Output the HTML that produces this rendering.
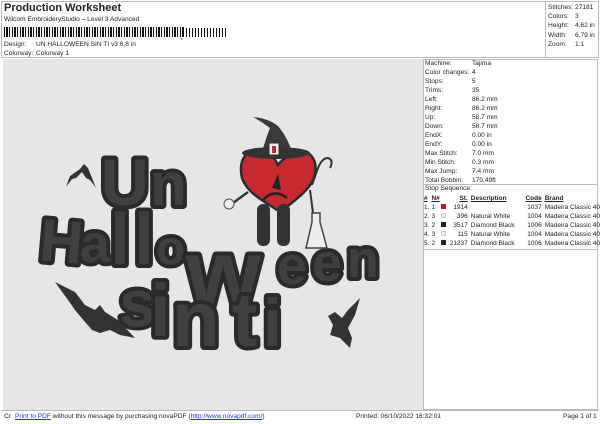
<!DOCTYPE html>
<html><head><style>
*{margin:0;padding:0;box-sizing:border-box}
body{width:600px;height:424px;background:#fff;position:relative;font-family:"Liberation Sans",sans-serif;overflow:hidden;color:#222}
.a{position:absolute;white-space:nowrap}
.s{font-size:6.6px}
.bar{position:absolute;left:4px;top:27px;width:180px;height:10px;background:repeating-linear-gradient(90deg,#111 0 1px,#fff 1px 2px,#111 2px 4px,#fff 4px 5px,#111 5px 6px,#fff 6px 8px)}
td{font-size:6.5px;padding:0;line-height:9px;white-space:nowrap}
svg text{font-family:"Liberation Sans",sans-serif;font-weight:bold;fill:#404040;stroke:#2a2a2a;stroke-width:8;paint-order:stroke;stroke-linejoin:round}
</style></head><body>
<div style="position:absolute;left:1px;top:1px;width:598px;height:57px;border:1px solid #bbb"></div>
<div class="a" style="left:4px;top:2px;font-size:11px;font-weight:bold">Production Worksheet</div>
<div class="a s" style="left:4px;top:16px">Wilcom EmbroideryStudio – Level 3 Advanced</div>
<div class="bar"></div>
<div class="a" style="left:186px;top:28px;width:40px;height:9px;background:repeating-linear-gradient(90deg,#111 0 1px,#fff 1px 3px)"></div>
<div class="a s" style="left:181px;top:34px;font-weight:bold">,</div>
<div class="a s" style="left:4px;top:41px">Design:</div>
<div class="a s" style="left:36px;top:41px">UN HALLOWEEN SIN TI v3 6,8 in</div>
<div class="a s" style="left:4px;top:50px">Colorway:</div>
<div class="a s" style="left:36px;top:50px">Colorway 1</div>
<div style="position:absolute;left:545px;top:1px;width:54px;height:57px;border-left:1px solid #bbb"></div>
<div class="a s" style="left:548px;top:3px;line-height:9.2px">Stitches:<br>Colors:<br>Height:<br>Width:<br>Zoom:</div>
<div class="a s" style="left:575px;top:3px;line-height:9.2px">27181<br>3<br>4.62 in<br>6.79 in<br>1:1</div>

<div style="position:absolute;left:3px;top:59px;width:420px;height:351px;background:#e6e6e6"></div>
<div style="position:absolute;left:423px;top:59px;width:175px;height:351px;border:1px solid #bbb"></div>
<div class="a s" style="left:425px;top:59px;line-height:9px">Machine:<br>Color changes:<br>Stops:<br>Trims:<br>Left:<br>Right:<br>Up:<br>Down:<br>EndX:<br>EndY:<br>Max Stitch:<br>Min Stitch:<br>Max Jump:<br>Total Bobbin:</div>
<div class="a s" style="left:472px;top:59px;line-height:9px">Tajima<br>4<br>5<br>35<br>86.2 mm<br>86.2 mm<br>58.7 mm<br>58.7 mm<br>0.00 in<br>0.00 in<br>7.0 mm<br>0.3 mm<br>7.4 mm<br>170.49ft</div>
<div style="position:absolute;left:423px;top:184px;width:175px;border-top:1px solid #bbb"></div>
<div style="position:absolute;left:423px;top:249px;width:175px;border-top:1px solid #bbb"></div>
<div class="a s" style="left:425px;top:185px">Stop Sequence:</div>
<table class="a" style="left:424px;top:194px;border-collapse:collapse">
<tr style="font-weight:bold;text-decoration:underline"><td style="width:9px">#</td><td style="width:10px">N#</td><td style="width:10px"></td><td style="width:20px;text-align:right">St.</td><td style="width:62px;padding-left:3px">Description</td><td style="width:20px;text-align:right">Code</td><td style="padding-left:3px">Brand</td></tr>
<tr><td>1.</td><td>1</td><td><span style="display:inline-block;width:5px;height:5px;background:#c8102e"></span></td><td style="text-align:right">1914</td><td></td><td style="text-align:right">1037</td><td style="padding-left:3px">Madeira Classic 40</td></tr>
<tr><td>2.</td><td>3</td><td><span style="display:inline-block;width:5px;height:5px;background:#eee;border:1px solid #ccc"></span></td><td style="text-align:right">396</td><td style="padding-left:3px">Natural White</td><td style="text-align:right">1004</td><td style="padding-left:3px">Madeira Classic 40</td></tr>
<tr><td>3.</td><td>2</td><td><span style="display:inline-block;width:5px;height:5px;background:#222"></span></td><td style="text-align:right">3517</td><td style="padding-left:3px">Diamond Black</td><td style="text-align:right">1006</td><td style="padding-left:3px">Madeira Classic 40</td></tr>
<tr><td>4.</td><td>3</td><td><span style="display:inline-block;width:5px;height:5px;background:#eee;border:1px solid #ccc"></span></td><td style="text-align:right">115</td><td style="padding-left:3px">Natural White</td><td style="text-align:right">1004</td><td style="padding-left:3px">Madeira Classic 40</td></tr>
<tr><td>5.</td><td>2</td><td><span style="display:inline-block;width:5px;height:5px;background:#222"></span></td><td style="text-align:right">21237</td><td style="padding-left:3px">Diamond Black</td><td style="text-align:right">1006</td><td style="padding-left:3px">Madeira Classic 40</td></tr>
</table>

<svg class="a" style="left:0;top:0" width="423" height="410">
<text x="101" y="205" font-size="66">U</text>
<text x="150" y="205" font-size="60">n</text>
<text x="40" y="262" font-size="60" transform="rotate(5 60 240)">H</text>
<text x="80" y="262" font-size="54">a</text>
<text x="110" y="264" font-size="72">l</text>
<text x="134" y="264" font-size="72">l</text>
<text x="156" y="264" font-size="48">o</text>
<text x="186" y="306" font-size="96">w</text>
<text x="277" y="284" font-size="54">e</text>
<text x="312" y="281" font-size="54">e</text>
<text x="347" y="277" font-size="52">n</text>
<text x="119" y="326" font-size="66">s</text>
<text x="150" y="336" font-size="74">i</text>
<text x="172" y="346" font-size="78">n</text>
<text x="232" y="346" font-size="76">t</text>
<text x="263" y="346" font-size="68">i</text>

<path d="M278 165 C265 138 235 148 242 178 C248 195 268 203 280 212 C295 200 320 185 315 163 C310 145 290 150 278 165Z" fill="#c62a30" stroke="#2a2a2a" stroke-width="2.5"/>
<path d="M253 117 Q268 118 278 126 Q288 138 292 152 L262 152 Q266 138 270 128 Q262 122 253 117Z" fill="#3a3a3a"/>
<ellipse cx="276" cy="153" rx="34" ry="6" fill="#333"/>
<rect x="269" y="143" width="10" height="12" fill="#eee" stroke="#333"/>
<rect x="272" y="146" width="4" height="7" fill="#c62a30"/>
<path d="M272 188 L278 174 L281 190Z" fill="#222"/>
<path d="M263 200 Q274 188 287 198" stroke="#222" stroke-width="2.5" fill="none"/>
<rect x="257" y="204" width="13" height="42" rx="6" fill="#333"/>
<rect x="277" y="204" width="13" height="42" rx="6" fill="#333"/>
<path d="M248 192 L233 203" stroke="#333" stroke-width="2.5"/>
<circle cx="229" cy="204" r="5" fill="#eee" stroke="#555"/>
<path d="M312 185 L318 168 Q322 158 328 158 Q334 160 330 168" stroke="#333" stroke-width="2" fill="none"/>
<path d="M310 190 L313 213" stroke="#333" stroke-width="2"/>
<path d="M312 213 L320 213 L320 222 L327 248 L306 248 L312 222Z" fill="#eee" stroke="#444" stroke-width="1.5"/>
<path d="M66 187 L70 176 L80 169 L84 164 L88 168 L92 178 L96 188 L90 180 L86 178 L82 172 L76 178 L72 179Z" fill="#333"/>
<path d="M55 282 L75 292 L85 305 L95 310 L100 305 L105 312 L118 320 L135 338 L120 335 L110 330 L100 333 L92 330 L85 322 L75 310 L68 300 Z" fill="#333"/>
<path d="M360 298 L348 310 L342 318 L335 312 L328 316 L333 325 L330 335 L340 338 L350 348 L352 338 L348 328 L355 315 Z" fill="#333"/>
</svg>

<div style="position:absolute;left:12px;top:410px;width:320px;height:4px;background:#fff"></div>
<div style="position:absolute;left:1px;top:410px;width:598px;border-top:1px solid #bbb"></div>
<div class="a s" style="left:4px;top:413px">Cr</div>
<div class="a s" style="left:15px;top:413px"><span style="color:#1a3cc8;text-decoration:underline">Print to PDF</span> without this message by purchasing novaPDF (<span style="color:#1a3cc8;text-decoration:underline">http://www.novapdf.com/</span>)</div>
<div class="a s" style="left:356px;top:413px">Printed: 06/10/2022 16:32:01</div>
<div class="a s" style="left:563px;top:413px">Page 1 of 1</div>
</body></html>
